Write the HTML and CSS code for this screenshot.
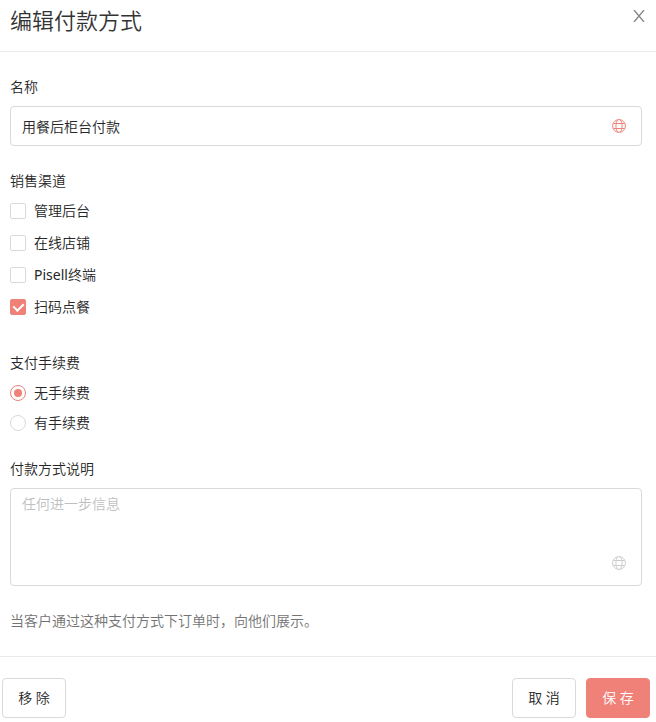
FILE: index.html
```
<!DOCTYPE html>
<html lang="zh-CN">

<head>
  <meta charset="UTF-8">
  <meta name="viewport" content="width=device-width, initial-scale=1">
  <title>编辑付款方式</title>
  <link rel="stylesheet" href="styles.css">
</head>

<body>
  <form class="drawer">
    <header class="drawer-header">
      <h1>编辑付款方式</h1>
      <button type="button" class="close" aria-label="关闭">
        <svg viewBox="0 0 12 12" width="12" height="12" fill="none" stroke="currentColor" stroke-width="1.4">
          <path d="M1 0 11 12M11 0 1 12" />
        </svg>
      </button>
    </header>

    <main class="drawer-body">
      <div class="form-group">
        <label class="title" for="pay_name">名称</label>
        <div class="field">
          <input type="text" id="pay_name" name="pay_name" value="用餐后柜台付款">
          <button type="button" class="translate" aria-label="翻译名称">
            <svg viewBox="0 0 14 14" width="14" height="14" fill="none" stroke="currentColor">
              <circle cx="7" cy="7" r="6.4" />
              <path d="M1.5 4.5h11M1.5 9.5h11M5.6 .8C3.4 4 3.4 10 5.6 13.2M8.4 .8c2.2 3.2 2.2 9.2 0 12.4" />
            </svg>
          </button>
        </div>
      </div>

      <fieldset class="form-group channels">
        <legend class="title">销售渠道</legend>
        <label class="option"><input type="checkbox" name="channel" value="admin">管理后台</label>
        <label class="option"><input type="checkbox" name="channel" value="shop">在线店铺</label>
        <label class="option"><input type="checkbox" name="channel" value="pos"><span><span class="brand">Pisell</span>终端</span></label>
        <label class="option"><input type="checkbox" name="channel" value="scan" checked>扫码点餐</label>
      </fieldset>

      <fieldset class="form-group fees">
        <legend class="title">支付手续费</legend>
        <label class="option"><input type="radio" name="fee" value="none" checked>无手续费</label>
        <label class="option"><input type="radio" name="fee" value="fee">有手续费</label>
      </fieldset>

      <div class="form-group">
        <label class="title" for="pay_desc">付款方式说明</label>
        <div class="field field-area">
          <textarea id="pay_desc" name="pay_desc" placeholder="任何进一步信息"></textarea>
          <button type="button" class="translate" aria-label="翻译说明">
            <svg viewBox="0 0 14 14" width="14" height="14" fill="none" stroke="currentColor">
              <circle cx="7" cy="7" r="6.4" />
              <path d="M1.5 4.5h11M1.5 9.5h11M5.6 .8C3.4 4 3.4 10 5.6 13.2M8.4 .8c2.2 3.2 2.2 9.2 0 12.4" />
            </svg>
          </button>
        </div>
      </div>

      <p class="help">当客户通过这种支付方式下订单时，向他们展示。</p>
    </main>

    <footer class="drawer-footer">
      <button type="button" class="btn">移 除</button>
      <div class="actions">
        <button type="button" class="btn">取 消</button>
        <button type="submit" class="btn btn-primary">保 存</button>
      </div>
    </footer>
  </form>
</body>

</html>
```

FILE: styles.css
```
* {
  box-sizing: border-box;
}

body {
  margin: 0;
  background: #fff;
  color: #262626;
  font-family: "Noto Sans", "Noto Sans CJK SC", sans-serif;
  font-size: 14px;
  font-weight: 350;
  line-height: 22px;
}

button,
input,
textarea {
  font: inherit;
  color: inherit;
}

.drawer-header {
  display: flex;
  justify-content: space-between;
  align-items: flex-start;
  padding: 4px 10px 15px;
  border-bottom: 1px solid #ebebeb;
}

h1 {
  margin: 0;
  color: #333;
  font-size: 22px;
  font-weight: 350;
  line-height: 32px;
}

.close {
  display: flex;
  margin: 6px 1px;
  padding: 0;
  border: none;
  background: none;
  color: #888;
  cursor: pointer;
}

.drawer-body {
  padding: 24px 14px 24px 10px;
}

.form-group {
  min-width: 0;
  margin: 0 0 24px;
  padding: 0;
  border: none;
}

.channels {
  margin-bottom: 34px;
}

.title {
  display: block;
  margin-bottom: 8px;
  padding: 0;
}

.field {
  display: flex;
  align-items: center;
  border: 1px solid #d9d9d9;
  border-radius: 4px;
}

.field input,
.field textarea {
  flex: 1;
  min-width: 0;
  height: 38px;
  padding: 0 11px;
  border: none;
  outline: none;
  background: none;
}

.field textarea {
  height: 96px;
  padding: 4px 11px;
  resize: none;
}

.field textarea::placeholder {
  color: #bfbfbf;
}

.translate {
  display: flex;
  margin-right: 15px;
  padding: 0;
  border: none;
  background: none;
  color: #ef8178;
  cursor: pointer;
}

.field-area .translate {
  align-self: flex-end;
  margin-bottom: 15px;
  color: #ccc;
}

.option {
  display: flex;
  align-items: center;
  gap: 8px;
}

.channels .option + .option {
  margin-top: 10px;
}

.fees .option + .option {
  margin-top: 8px;
}

.brand {
  font-weight: 400;
}

.option input {
  appearance: none;
  display: grid;
  place-items: center;
  width: 16px;
  height: 16px;
  margin: 0;
  border: 1px solid #d9d9d9;
  border-radius: 2px;
}

.option input[type="radio"] {
  border-radius: 50%;
}

.option input:checked {
  border-color: #ef8178;
}

.option input[type="checkbox"]:checked {
  background: #ef8178;
}

/* tick */
.option input[type="checkbox"]:checked::after {
  content: "";
  width: 5px;
  height: 8px;
  margin-bottom: 2px;
  border: solid #fff;
  border-width: 0 2px 2px 0;
  transform: rotate(45deg);
}

.option input[type="radio"]:checked::after {
  content: "";
  width: 8px;
  height: 8px;
  border-radius: 50%;
  background: #ef8178;
}

.help {
  margin: 0;
  color: #737373;
}

.drawer-footer {
  display: flex;
  justify-content: space-between;
  padding: 21px 6px 4px 2px;
  border-top: 1px solid #ebebeb;
}

.actions {
  display: flex;
  gap: 10px;
}

.btn {
  min-width: 64px;
  height: 40px;
  padding: 0 15px;
  border: 1px solid #d9d9d9;
  border-radius: 4px;
  background: #fff;
  cursor: pointer;
}

.btn-primary {
  border-color: #ef8178;
  background: #ef8178;
  color: #fff;
}
```
